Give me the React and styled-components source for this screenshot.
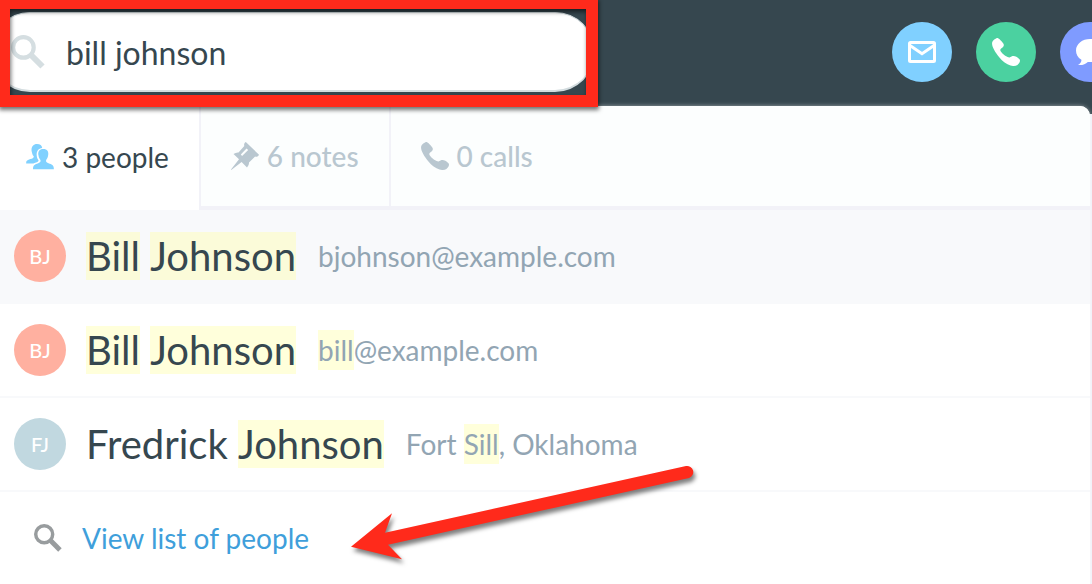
import React, { useState } from "react";
import styled, { createGlobalStyle } from "styled-components";

const GlobalStyle = createGlobalStyle`
  *, *::before, *::after { box-sizing: border-box; }
  body {
    margin: 0;
    background: #f1f1f8;
    color: #36474f;
    font-family: Lato, "Open Sans", sans-serif;
    font-size: 28px;
    line-height: 40px;
  }
`;

const Page = styled.div`
  overflow: clip;
`;

const Header = styled.header`
  display: flex;
  align-items: flex-start;
  justify-content: space-between;
  gap: 24px;
  padding: 12px 0 22px;
  background: #36474f;
`;

const SearchForm = styled.form`
  position: relative;
  z-index: 2;
  display: flex;
  align-items: center;
  gap: 21px;
  flex: 0 1 605px;
  height: 80px;
  margin-left: -10px;
  padding: 0 40px 0 20px;
  border: solid #d3dcdf;
  border-width: 1px 1px 2px;
  border-radius: 40px;
  background: #fff;
`;

const SearchInput = styled.input`
  flex: 1;
  min-width: 0;
  padding: 2px 0 0;
  border: 0;
  outline: 0;
  background: transparent;
  color: #36474f;
  font: inherit;
  font-size: 32px;
`;

const Highlight = styled.div`
  position: absolute;
  inset: -16px -4px -17px 7px;
  border: 12px solid #ff2a1b;
  filter: drop-shadow(1px 3px 2px rgba(0, 0, 0, 0.55));
  pointer-events: none;
`;

const Actions = styled.nav`
  display: flex;
  flex: none;
  gap: 24px;
  margin: 10px -28px 0 0;
`;

const RoundButton = styled.button`
  display: grid;
  place-items: center;
  width: 60px;
  height: 60px;
  padding: 0;
  border: 0;
  border-radius: 50%;
  background: ${(p) => p.$color};
  color: #fff;
`;

const Panel = styled.main`
  position: relative;
  margin: -8px 2px 0 0;
  border-radius: 0 10px 0 0;
  background: #fff;
  box-shadow: 0 0 4px rgba(255, 255, 255, 0.5);
`;

const Tabs = styled.div`
  display: flex;
  height: 104px;
  padding-right: 30px;
  margin-left: -4px;
  border-radius: 0 10px 0 0;
  background: #fcfefe;
  box-shadow: inset 0 -4px #f2f2f8;
`;

const Tab = styled.button`
  display: flex;
  align-items: center;
  gap: 8px;
  padding: 0 30px ${(p) => (p.$active ? 2 : 4)}px;
  border: 0;
  border-right: ${(p) => (p.$last ? 0 : 2)}px solid #f2f2f8;
  background: ${(p) => (p.$active ? "#fff" : "transparent")};
  color: ${(p) => (p.$active ? "#36474f" : "#b9c7d0")};
  font: inherit;
  font-weight: ${(p) => (p.$active ? 400 : 500)};
  white-space: nowrap;

  svg { color: ${(p) => (p.$active ? "#80d1ff" : "#b9c7d0")}; }
`;

const Results = styled.ul`
  margin: 0;
  padding: 0;
  list-style: none;
`;

const Result = styled.li`
  display: flex;
  align-items: center;
  height: 94px;
  padding: 0 14px;
  border-bottom: 2px solid #f8f9fb;
  background: ${(p) => (p.$selected ? "#f8f9fb" : "#fff")};
  white-space: nowrap;
`;

const Avatar = styled.span`
  display: grid;
  place-items: center;
  flex: none;
  width: 52px;
  height: 52px;
  margin-right: 20px;
  border-radius: 50%;
  background: ${(p) => p.$color};
  color: #fff;
  font-size: 20px;
  font-weight: 500;
`;

const Name = styled.span`
  margin-right: 22px;
  font-size: 40px;
  line-height: 48px;
`;

const Detail = styled.span`
  color: #92a5b3;
`;

const Match = styled.mark`
  display: inline-block;
  background: rgba(255, 255, 170, 0.42);
  color: inherit;
`;

const Footer = styled.footer`
  position: relative;
  display: flex;
  align-items: center;
  gap: 20px;
  height: 92px;
  padding: 0 34px;
  color: #989c9e;
`;

const ListLink = styled.a`
  color: #3f9fdb;
  text-decoration: none;
`;

const Arrow = styled.svg`
  position: absolute;
  left: 340px;
  top: -32px;
  filter: drop-shadow(2px 4px 2px rgba(0, 0, 0, 0.5));
  pointer-events: none;
`;

const SearchIcon = ({ size, color = "currentColor" }) => (
  <svg width={size} height={size} viewBox="0 0 34 34" fill="none" stroke={color} aria-hidden="true">
    <circle cx="12.400" cy="12.400" r="10.300" strokeWidth="4.200" />
    <path d="M19.500 19.500 31.500 31.500" strokeWidth="6" />
  </svg>
);

const PhoneIcon = () => (
  <svg width="28" height="28" viewBox="0 0 26 26" fill="currentColor" aria-hidden="true">
    <path d="M5.2.1C6.3.1 9.5 3.7 10.5 5.2c.8 1.3.6 2.5-.5 3.5-1 .9-2.300 1.400-2.300 2.500 0 1.500 3.200 4.600 5 5.600 1.400.8 2.600 1.300 3.600 1.200 1.300-.1 1.700-1 2.900-1.200 1-.2 2.300 0 3.400.7 1.300.8 3.300 2.200 3.400 3.300.1 1.600-1 3.300-2.400 4.200-1.700 1.100-4.100 1.300-6.400.6-3.700-1.100-7.500-4.100-10.300-7.500C2.600 13-.3 7.700.1 4.500.4 2.400 3.500.1 5.200.1Z" />
  </svg>
);

const MailIcon = () => (
  <svg width="28" height="22" viewBox="0 0 28 22" fill="none" stroke="currentColor" strokeWidth="3" aria-hidden="true">
    <rect x="1.500" y="1.500" width="25" height="19" rx="1" />
    <path d="m2 4.500 12 8.200 12-8.200" />
  </svg>
);

const ChatIcon = () => (
  <svg width="28" height="28" viewBox="0 0 28 28" fill="currentColor" aria-hidden="true">
    <path d="M14 1C6.500 1 0 5.800 0 12.500c0 4.100 1.800 7 5.400 9.300.2 2-1 3.800-3.400 5.200 4.200.5 7.500-.7 9.800-3 9 .8 16.200-4.400 16.200-11.500C28 5.800 21.500 1 14 1Z" />
  </svg>
);

const PeopleIcon = () => (
  <svg width="28" height="28" viewBox="0 0 28 28" fill="currentColor" aria-hidden="true">
    <path d="M11 1c3.200 0 4.900 1.500 5.200 4-3.900.6-5.900 3.400-5.500 7.500.2 2 .8 3.500 1.900 4.900-.2 1.500-2.600 2-5.300 3.100H.2c-.3-2.700 1-3.400 4.200-4.400C6.500 15.400 8 15 7.700 13.300 6.300 12 6.200 10.200 5.700 8.600 4.900 4.300 6.900 1 11 1Z" />
    <path d="M17.300 6c3.900 0 5.700 2.700 4.800 6.600-.4 2-.9 3.300-2 4.500-.4 2.300.8 2.700 3.600 3.600 2.900.9 4.200 2.100 4.200 5.600H7c0-3.500 1.200-4.700 4.100-5.600 2.600-.8 3.800-1.300 3.400-3.600-1.100-1.200-1.600-2.500-2-4.500-.9-3.900 1-6.600 4.800-6.600Z" />
  </svg>
);

const PinIcon = () => (
  <svg width="28" height="28" viewBox="0 0 28 28" aria-hidden="true">
    <path
      fill="currentColor"
      fillRule="evenodd"
      d="M14.800 0 28 12.700c-1 1.900-2.200 2.500-3.900 1.900L18 20.500c.1 1.800-.7 3.500-2 5L10.600 20 .3 28l-.3-.4L8 17.300 2.500 12c1.700-1.200 3.300-1.700 5-1.500L13.300 4.100C12.800 2.400 13.200.8 14.800 0Zm.7 6.400-5.700 6.200 1.300 1.300 6.100-5.900Z"
    />
  </svg>
);

const TABS = [
  { id: "people", label: "3 people", Icon: PeopleIcon },
  { id: "notes", label: "6 notes", Icon: PinIcon },
  { id: "calls", label: "0 calls", Icon: PhoneIcon },
];

export default function App() {
  const [query, setQuery] = useState("bill johnson");
  const [tab, setTab] = useState("people");

  return (
    <Page>
      <GlobalStyle />
      <Header>
        <SearchForm role="search" onSubmit={(e) => e.preventDefault()}>
          <SearchIcon size={34} color="#d5dee1" />
          <SearchInput aria-label="Search" value={query} onChange={(e) => setQuery(e.target.value)} />
          <Highlight />
        </SearchForm>
        <Actions aria-label="Contact">
          <RoundButton type="button" $color="#80d0ff" aria-label="Email"><MailIcon /></RoundButton>
          <RoundButton type="button" $color="#4bd1a0" aria-label="Call"><PhoneIcon /></RoundButton>
          <RoundButton type="button" $color="#7f9bff" aria-label="Chat"><ChatIcon /></RoundButton>
        </Actions>
      </Header>
      <Panel>
        <Tabs role="tablist">
          {TABS.map(({ id, label, Icon }, i) => (
            <Tab
              key={id}
              type="button"
              role="tab"
              aria-selected={tab === id}
              $active={tab === id}
              $last={i === TABS.length - 1}
              onClick={() => setTab(id)}
            >
              <Icon />
              {label}
            </Tab>
          ))}
        </Tabs>
        <Results>
          <Result $selected>
            <Avatar $color="#ffb0a0">BJ</Avatar>
            <Name><Match>Bill</Match> <Match>Johnson</Match></Name>
            <Detail>bjohnson@example.com</Detail>
          </Result>
          <Result>
            <Avatar $color="#ffb0a0">BJ</Avatar>
            <Name><Match>Bill</Match> <Match>Johnson</Match></Name>
            <Detail><Match>bill</Match>@example.com</Detail>
          </Result>
          <Result>
            <Avatar $color="#c1d8e0">FJ</Avatar>
            <Name>Fredrick <Match>Johnson</Match></Name>
            <Detail>Fort <Match>Sill</Match>, Oklahoma</Detail>
          </Result>
        </Results>
        <Footer>
          <SearchIcon size={28} />
          <ListLink href="#people">View list of people</ListLink>
          <Arrow width="370" height="110" viewBox="340 460 370 110" aria-hidden="true">
            <path
              fill="#ff2a1b"
              d="M351 546.700 392 513.300 385 532.700 686 466a6.200 6.200 0 0 1 3 12L388 544.700 402 559.300Z"
            />
          </Arrow>
        </Footer>
      </Panel>
    </Page>
  );
}
